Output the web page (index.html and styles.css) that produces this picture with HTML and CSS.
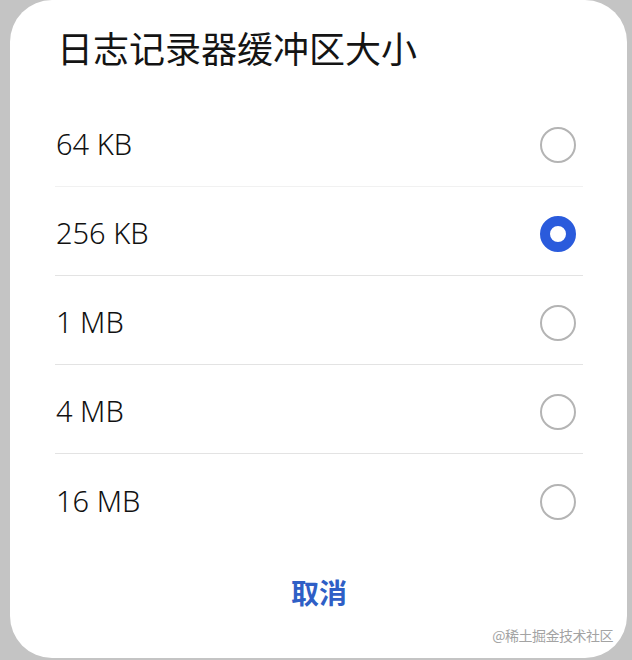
FILE: index.html
```html
<!DOCTYPE html>
<html lang="zh-CN">
<head>
  <meta charset="UTF-8">
  <title>日志记录器缓冲区大小</title>
  <link rel="stylesheet" href="styles.css">
</head>

<body>
<div class="dialog">
  <h3 class="title">日志记录器缓冲区大小</h3>

  <ul class="options">
    <li class="option">
      <span class="label">64 KB</span>
      <span class="radio"></span>
    </li>
    <li class="option">
      <span class="label">256 KB</span>
      <span class="radio checked"></span>
    </li>
    <li class="option">
      <span class="label">1 MB</span>
      <span class="radio"></span>
    </li>
    <li class="option">
      <span class="label">4 MB</span>
      <span class="radio"></span>
    </li>
    <li class="option">
      <span class="label">16 MB</span>
      <span class="radio"></span>
    </li>
  </ul>

  <div class="actions">
    <a href="#" class="btn-cancel">取消</a>
  </div>

  <span class="watermark">@稀土掘金技术社区</span>
</div>
</body>
</html>
```

FILE: styles.css
```css
* {
  margin: 0;
  padding: 0;
  box-sizing: border-box;
  font-family: "Noto Sans", "Noto Sans CJK SC", sans-serif;
}

body {
  background: #c4c4c4;
  width: 632px;
  height: 660px;
  overflow: hidden;
}

.dialog {
  position: relative;
  margin-left: 10px;
  width: 617px;
  height: 658px;
  background: #fff;
  border-radius: 42px;
  padding: 22px 44px 0 45px;
}

.title {
  font-family: "Noto Sans CJK SC", sans-serif;
  font-size: 36px;
  font-weight: 400;
  line-height: 50px;
  color: #141414;
  padding-left: 2px;
  margin-bottom: 26px;
}

.options {
  list-style: none;
}

.option {
  height: 89px;
  display: flex;
  align-items: center;
  justify-content: space-between;
  border-bottom: 1px solid #e3e3e3;
  padding: 3px 7px 0 1px;
}

.option:first-child {
  border-bottom-color: #f1f1f1;
}

.option:last-child {
  border-bottom: none;
}

.radio {
  width: 36px;
  height: 36px;
  border-radius: 50%;
  border: 2px solid #b4b4b4;
  margin-top: 3px;
}

.label {
  font-size: 29px;
  font-weight: 300;
  color: #111;
}

.radio.checked {
  border: 10px solid #2a5bdc;
}

.actions {
  display: flex;
  justify-content: center;
  padding-top: 29px;
}

.btn-cancel {
  font-family: "Noto Sans CJK SC", sans-serif;
  font-size: 28px;
  font-weight: 700;
  color: #2f5fc6;
  text-decoration: none;
}

.watermark {
  position: absolute;
  right: 14px;
  bottom: 15px;
  font-family: "Noto Sans CJK SC", sans-serif;
  font-size: 14px;
  line-height: 16px;
  letter-spacing: -0.5px;
  color: #a3a3a3;
}
```
